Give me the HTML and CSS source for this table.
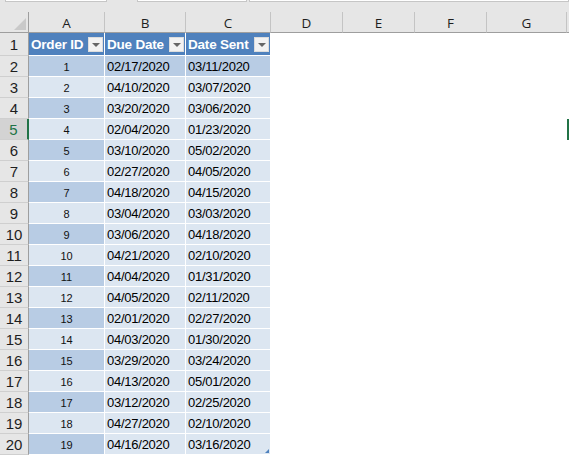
FILE: index.html
```html
<!DOCTYPE html>
<html>
<head>
<meta charset="utf-8">
<link rel="stylesheet" href="styles.css">
</head>
<body>
<div class="toolbar">
  <div class="tb-box b1"></div>
  <div class="tb-box b2"></div>
  <div class="tb-box b3"></div>
</div>
<div class="sheet">
  <div class="ch corner"><span class="tri"></span></div>
  <div class="ch">A</div><div class="ch">B</div><div class="ch">C</div><div class="ch">D</div><div class="ch">E</div><div class="ch">F</div><div class="ch">G</div><div class="ch last"></div>

  <div class="rh">1</div>
  <div class="hd"><span>Order ID</span><span class="dd"></span></div>
  <div class="hd"><span>Due Date</span><span class="dd"></span></div>
  <div class="hd"><span>Date Sent</span><span class="dd"></span></div>
  <div class="e"></div><div class="e"></div><div class="e"></div><div class="e"></div><div class="e"></div>

  <div class="rh">2</div><div class="id dk">1</div><div class="dt dk">02/17/2020</div><div class="dt dk">03/11/2020</div><div class="e"></div><div class="e"></div><div class="e"></div><div class="e"></div><div class="e"></div>
  <div class="rh">3</div><div class="id">2</div><div class="dt">04/10/2020</div><div class="dt">03/07/2020</div><div class="e"></div><div class="e"></div><div class="e"></div><div class="e"></div><div class="e"></div>
  <div class="rh">4</div><div class="id dk">3</div><div class="dt">03/20/2020</div><div class="dt">03/06/2020</div><div class="e"></div><div class="e"></div><div class="e"></div><div class="e"></div><div class="e"></div>
  <div class="rh sel">5</div><div class="id">4</div><div class="dt">02/04/2020</div><div class="dt">01/23/2020</div><div class="e"></div><div class="e"></div><div class="e"></div><div class="e"></div><div class="e active"></div>
  <div class="rh">6</div><div class="id dk">5</div><div class="dt">03/10/2020</div><div class="dt">05/02/2020</div><div class="e"></div><div class="e"></div><div class="e"></div><div class="e"></div><div class="e"></div>
  <div class="rh">7</div><div class="id">6</div><div class="dt">02/27/2020</div><div class="dt">04/05/2020</div><div class="e"></div><div class="e"></div><div class="e"></div><div class="e"></div><div class="e"></div>
  <div class="rh">8</div><div class="id dk">7</div><div class="dt">04/18/2020</div><div class="dt">04/15/2020</div><div class="e"></div><div class="e"></div><div class="e"></div><div class="e"></div><div class="e"></div>
  <div class="rh">9</div><div class="id">8</div><div class="dt">03/04/2020</div><div class="dt">03/03/2020</div><div class="e"></div><div class="e"></div><div class="e"></div><div class="e"></div><div class="e"></div>
  <div class="rh">10</div><div class="id dk">9</div><div class="dt">03/06/2020</div><div class="dt">04/18/2020</div><div class="e"></div><div class="e"></div><div class="e"></div><div class="e"></div><div class="e"></div>
  <div class="rh">11</div><div class="id">10</div><div class="dt">04/21/2020</div><div class="dt">02/10/2020</div><div class="e"></div><div class="e"></div><div class="e"></div><div class="e"></div><div class="e"></div>
  <div class="rh">12</div><div class="id dk">11</div><div class="dt">04/04/2020</div><div class="dt">01/31/2020</div><div class="e"></div><div class="e"></div><div class="e"></div><div class="e"></div><div class="e"></div>
  <div class="rh">13</div><div class="id">12</div><div class="dt">04/05/2020</div><div class="dt">02/11/2020</div><div class="e"></div><div class="e"></div><div class="e"></div><div class="e"></div><div class="e"></div>
  <div class="rh">14</div><div class="id dk">13</div><div class="dt">02/01/2020</div><div class="dt">02/27/2020</div><div class="e"></div><div class="e"></div><div class="e"></div><div class="e"></div><div class="e"></div>
  <div class="rh">15</div><div class="id">14</div><div class="dt">04/03/2020</div><div class="dt">01/30/2020</div><div class="e"></div><div class="e"></div><div class="e"></div><div class="e"></div><div class="e"></div>
  <div class="rh">16</div><div class="id dk">15</div><div class="dt">03/29/2020</div><div class="dt">03/24/2020</div><div class="e"></div><div class="e"></div><div class="e"></div><div class="e"></div><div class="e"></div>
  <div class="rh">17</div><div class="id">16</div><div class="dt">04/13/2020</div><div class="dt">05/01/2020</div><div class="e"></div><div class="e"></div><div class="e"></div><div class="e"></div><div class="e"></div>
  <div class="rh">18</div><div class="id dk">17</div><div class="dt">03/12/2020</div><div class="dt">02/25/2020</div><div class="e"></div><div class="e"></div><div class="e"></div><div class="e"></div><div class="e"></div>
  <div class="rh">19</div><div class="id">18</div><div class="dt">04/27/2020</div><div class="dt">02/10/2020</div><div class="e"></div><div class="e"></div><div class="e"></div><div class="e"></div><div class="e"></div>
  <div class="rh">20</div><div class="id dk">19</div><div class="dt">04/16/2020</div><div class="dt end">03/16/2020</div><div class="e"></div><div class="e"></div><div class="e"></div><div class="e"></div><div class="e"></div>
</div>
</body>
</html>
```

FILE: styles.css
```css
html, body {
  margin: 0;
  padding: 0;
  background: #ffffff;
  overflow: hidden;
}
body {
  font-family: "Liberation Sans", Arial, sans-serif;
  color: #000;
}
.toolbar {
  height: 12px;
  background: #e6e6e6;
  display: flex;
  align-items: flex-start;
}
.tb-box {
  height: 1px;
  background: #ffffff;
  border: 1px solid #c6c6c6;
  border-top: none;
}
.b1 { margin-left: 5px; width: 100px; }
.b2 { margin-left: 30px; width: 108px; }
.b3 { margin-left: 2px; flex: 1; }

.sheet {
  display: grid;
  grid-template-columns: 29px 76px 81px 85px 72px 72px 72px 80px 1fr;
  grid-template-rows: 21px 23px repeat(19, 21px);
}
.ch {
  background: #e6e6e6;
  border-right: 1px solid #c4c4c4;
  border-bottom: 1px solid #9e9e9e;
  display: flex;
  align-items: center;
  justify-content: center;
  font-family: "Open Sans", "Liberation Sans", sans-serif;
  font-size: 13.5px;
  color: #1e1e1e;
  position: relative;
  padding-top: 1px;
  box-sizing: border-box;
}
.ch.last { border-right: none; }
.corner { border-right: 1px solid #9e9e9e; }
.tri {
  position: absolute;
  right: 2px;
  bottom: 2px;
  width: 0;
  height: 0;
  border-left: 12px solid transparent;
  border-bottom: 12px solid #c9c9c9;
}
.rh {
  background: #e6e6e6;
  border-right: 1px solid #9e9e9e;
  border-bottom: 1px solid #cfcfcf;
  display: flex;
  align-items: center;
  justify-content: center;
  font-size: 15px;
  color: #1e1e1e;
  box-sizing: border-box;
  padding-top: 1px;
}
.rh.sel {
  background: #d3d3d3;
  color: #217346;
  border-right: 2px solid #217346;
}
.hd {
  background: #4f81bd;
  color: #ffffff;
  font-weight: bold;
  font-size: 13.5px;
  letter-spacing: -0.2px;
  border-right: 1px solid #ffffff;
  border-bottom: 1px solid #ffffff;
  display: flex;
  align-items: center;
  justify-content: space-between;
  padding-left: 2px;
  padding-right: 1px;
  white-space: nowrap;
}
.dd {
  width: 13px;
  height: 13px;
  background: #f2f2f2;
  border: 1px solid #dcdcdc;
  position: relative;
  flex: none;
}
.dd::after {
  content: "";
  position: absolute;
  left: 3px;
  top: 5px;
  border-left: 4px solid transparent;
  border-right: 4px solid transparent;
  border-top: 4px solid #666666;
}
.id, .dt {
  background: #dce6f1;
  border-right: 1px solid #ffffff;
  border-bottom: 1px solid #ffffff;
  display: flex;
  align-items: center;
}
.dk { background: #b8cce4; }
.id {
  justify-content: center;
  font-size: 11px;
  color: #111;
  padding-top: 1px;
  box-sizing: border-box;
}
.dt {
  padding-left: 2px;
  font-size: 13px;
  letter-spacing: -0.25px;
  color: #000;
  padding-top: 1px;
  box-sizing: border-box;
}
.dt.end { position: relative; }
.dt.end::after {
  content: "";
  position: absolute;
  right: 1px;
  bottom: 1px;
  width: 0;
  height: 0;
  border-left: 4px solid transparent;
  border-bottom: 4px solid #4f81bd;
}
.e { background: #ffffff; }
.e.active {
  box-shadow: inset 2px 0 0 #217346;
}
```
